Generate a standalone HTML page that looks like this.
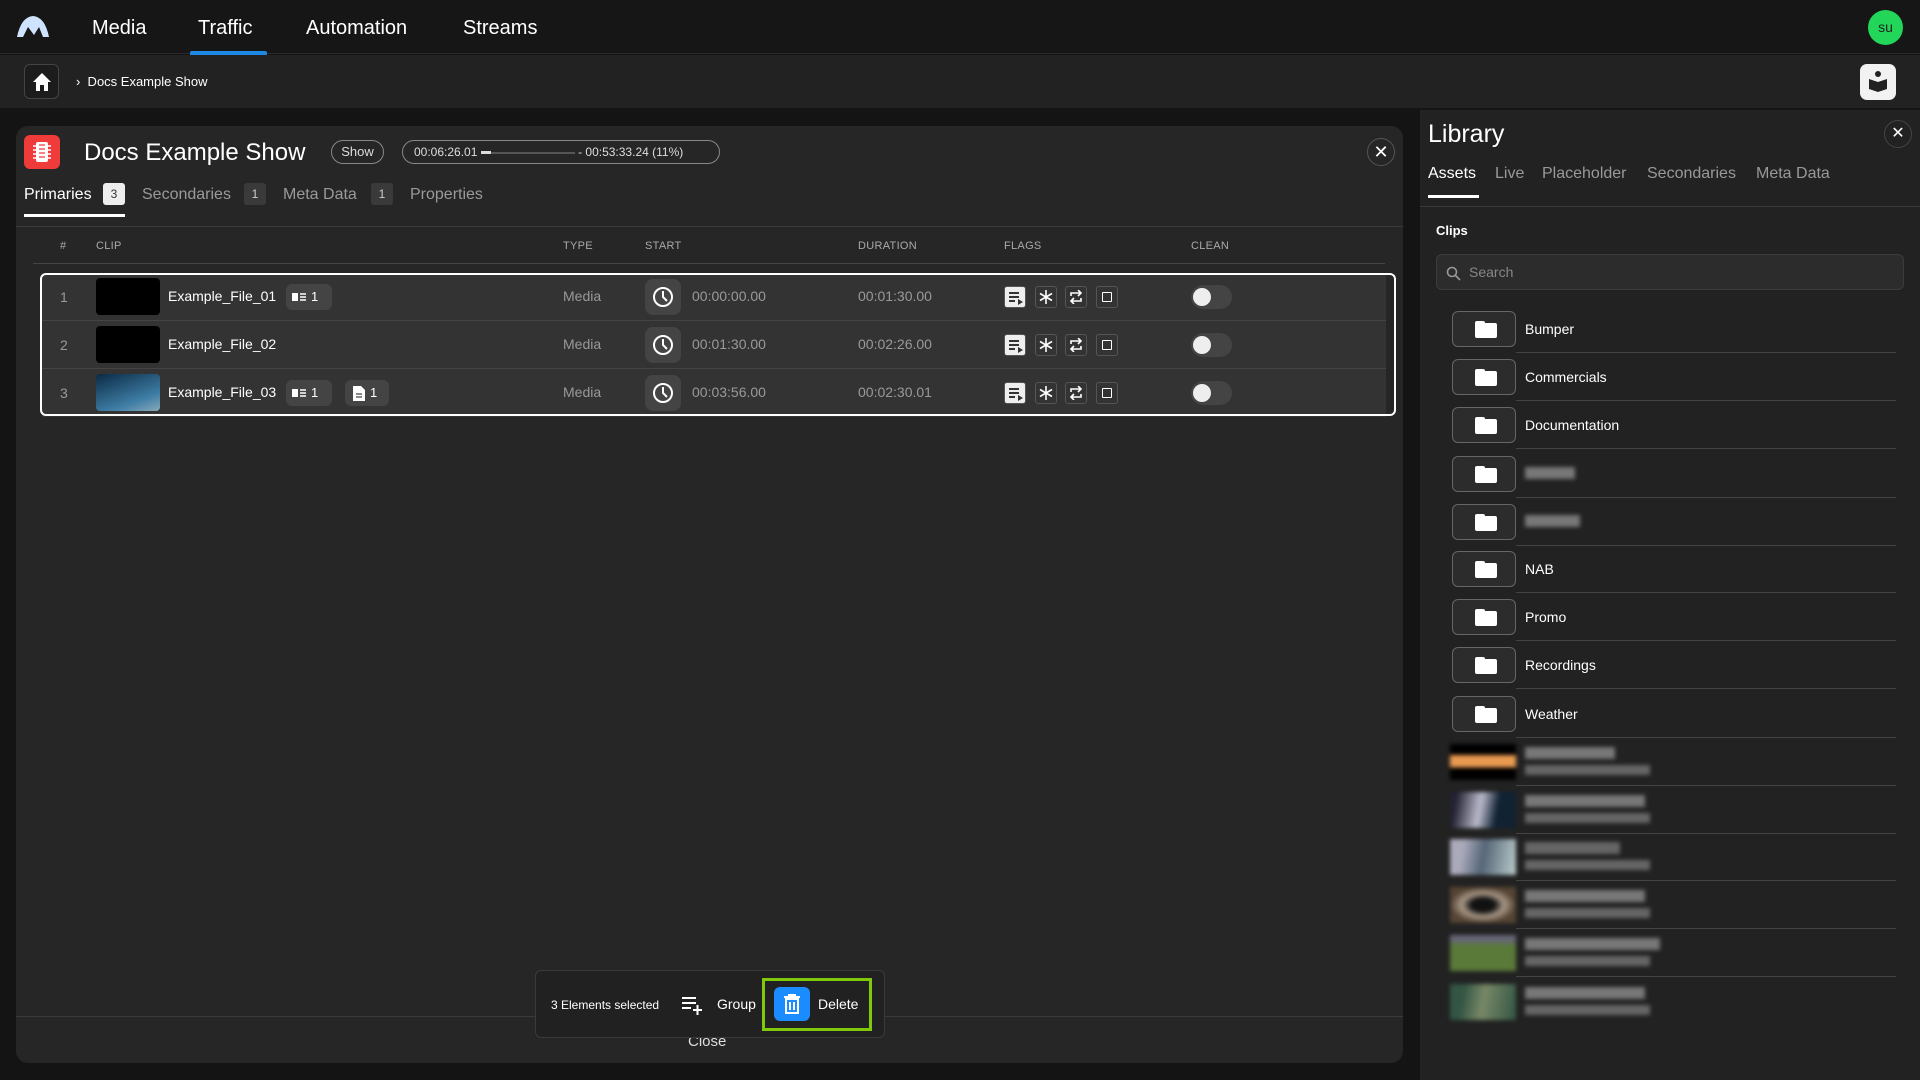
<!DOCTYPE html>
<html><head><meta charset="utf-8"><style>
*{box-sizing:border-box;margin:0;padding:0}
body{width:1920px;height:1080px;background:#141414;font-family:"Liberation Sans",sans-serif;color:#fff;position:relative;overflow:hidden}
.a{position:absolute}
.nav{left:0;top:0;width:1920px;height:54px;background:#161616;border-bottom:1px solid #2a2a2a}
.nav span{position:absolute;top:17px;font-size:20px;color:#fff}
.crumb{left:0;top:55px;width:1920px;height:53px;background:#222}
.panel{left:16px;top:126px;width:1387px;height:937px;background:#262626;border-radius:12px}
.tab{font-size:16px;color:#9a9a9a;top:186px}
.badge{background:#3a3a3a;color:#ccc;font-size:12px;border-radius:3px;width:22px;height:22px;text-align:center;line-height:22px;top:183px}
.th{top:240px;font-size:11px;color:#aaa;letter-spacing:.3px}
.row{left:42px;width:1344px;height:48px;background:#333;border-bottom:1px solid #444}
.row div,.row span,.row svg{position:absolute}
.num{left:18px;top:16px;font-size:14px;color:#999}
.thumb{left:54px;top:5px;width:64px;height:37px;background:#000;border-radius:4px}
.name{left:126px;top:15px;font-size:14px;color:#fff}
.cb{height:26px;background:#444;border-radius:6px;top:11px;font-size:13px;color:#fff;line-height:26px;padding-left:25px}
.med{left:521px;top:15px;font-size:14px;color:#999}
.clk{left:603px;top:6px;width:36px;height:36px;background:#444;border-radius:8px}
.t{top:15px;font-size:14px;color:#999}
.fl{top:13px;width:22px;height:22px;border:1px solid #555;border-radius:3px}
.tg{left:1149px;top:12px;width:41px;height:24px;background:#444;border-radius:12px}
.tg:after{content:"";position:absolute;left:2px;top:3px;width:18px;height:18px;border-radius:50%;background:#eee}
.lib{left:1420px;top:110px;width:500px;height:970px;background:#222}
.ltab{top:165px;font-size:16px;color:#999}
.frow{left:1452px;width:444px;height:48px}
.fb{position:absolute;left:0;top:6px;width:64px;height:36px;border:1px solid #666;border-radius:6px;background:#2c2c2c}
.fb:after{content:"";position:absolute;left:22px;top:11px;width:22px;height:15px;background:#fff;border-radius:2px}
.fb:before{content:"";position:absolute;left:22px;top:9px;width:10px;height:4px;background:#fff;border-radius:2px 2px 0 0}
.fl2{position:absolute;left:73px;top:16px;font-size:14px;color:#fff}
.sep{position:absolute;left:64px;right:0;bottom:0;height:1px;background:#444}
.bl{position:absolute;filter:blur(2px)}
</style></head><body>
<div class="a nav">
<svg class="a" style="left:17px;top:15px" width="32" height="22" viewBox="0 0 32 22"><path d="M0 22 Q4 2 16 1 Q28 2 32 22 L26 22 L22 12 L17 20 L11 12 L6 22Z" fill="#cfe3ff"/></svg>
<span style="left:92px">Media</span><span style="left:198px">Traffic</span><span style="left:306px">Automation</span><span style="left:463px">Streams</span>
<div class="a" style="left:190px;top:51px;width:77px;height:4px;background:#1e88e5;border-radius:2px 2px 0 0"></div>
<div class="a" style="left:1868px;top:10px;width:35px;height:35px;border-radius:50%;background:#22d65a;color:#222;font-size:14px;text-align:center;line-height:35px">su</div>
</div>
<div class="a crumb">
<div class="a" style="left:24px;top:9px;width:35px;height:35px;border:1px solid #444;border-radius:6px;background:#1c1c1c"><svg class="a" style="left:7px;top:7px" width="20" height="20" viewBox="0 0 20 20"><path d="M10 1 L19 10 L16 10 L16 19 L12 19 L12 13 L8 13 L8 19 L4 19 L4 10 L1 10Z" fill="#fff"/></svg></div>
<div class="a" style="left:76px;top:19px;font-size:13px;color:#fff">›&nbsp; Docs Example Show</div>
<div class="a" style="left:1860px;top:9px;width:36px;height:36px;background:#f2f2f2;border-radius:7px"><svg class="a" style="left:8px;top:6px" width="20" height="22" viewBox="0 0 20 22"><circle cx="10" cy="4" r="3" fill="#222"/><path d="M1 9 L10 12 L19 9 L19 19 L10 22 L1 19Z" fill="#222"/></svg></div>
</div>
<div class="a panel"></div>
<div class="a" style="left:24px;top:135px;width:36px;height:34px;background:#f03b3b;border-radius:6px"><svg class="a" style="left:9px;top:6px" width="18" height="22" viewBox="0 0 18 22"><rect x="3" y="1" width="12" height="20" rx="2" fill="#fff"/><path d="M0 5H18M0 9H18M0 13H18M0 17H18" stroke="#fff" stroke-width="1.5"/><path d="M6 4H12M6 8H12M6 12H12M6 16H12" stroke="#f03b3b" stroke-width="1.2"/></svg></div>
<div class="a" style="left:84px;top:139px;font-size:24px">Docs Example Show</div>
<div class="a" style="left:331px;top:140px;width:53px;height:24px;border:1px solid #888;border-radius:12px;font-size:13px;text-align:center;line-height:22px;color:#ddd">Show</div>
<div class="a" style="left:402px;top:140px;width:318px;height:24px;border:1px solid #888;border-radius:12px;font-size:12px;line-height:22px;color:#ddd;padding-left:11px">00:06:26.01 <span style="display:inline-block;width:94px;height:2px;background:#555;vertical-align:middle;position:relative"><span style="position:absolute;left:0;top:-1px;width:10px;height:3px;background:#ddd"></span></span> - 00:53:33.24 (11%)</div>
<div class="a" style="left:1367px;top:138px;width:28px;height:28px;border:1px solid #555;border-radius:50%;text-align:center;line-height:26px;font-size:18px">✕</div>
<div class="a tab" style="left:24px;color:#fff">Primaries</div><div class="a badge" style="left:103px;background:#eee;color:#333">3</div>
<div class="a tab" style="left:142px">Secondaries</div><div class="a badge" style="left:244px">1</div>
<div class="a tab" style="left:283px">Meta Data</div><div class="a badge" style="left:371px">1</div>
<div class="a tab" style="left:410px">Properties</div>
<div class="a" style="left:24px;top:214px;width:101px;height:3px;background:#fff"></div>
<div class="a" style="left:16px;top:226px;width:1387px;height:1px;background:#3a3a3a"></div>
<div class="a th" style="left:60px">#</div><div class="a th" style="left:96px">CLIP</div><div class="a th" style="left:563px">TYPE</div><div class="a th" style="left:645px">START</div><div class="a th" style="left:858px">DURATION</div><div class="a th" style="left:1004px">FLAGS</div><div class="a th" style="left:1191px">CLEAN</div>
<div class="a" style="left:33px;top:263px;width:1352px;height:1px;background:#444"></div>

<!-- row template pieces repeated -->
<div class="a row" style="top:273px"><span class="num">1</span><div class="thumb"></div><span class="name">Example_File_01</span><div class="cb" style="left:244px;width:46px">1<svg style="left:6px;top:8px" width="14" height="10" viewBox="0 0 14 10"><rect x="0" y="1" width="6" height="8" fill="#fff"/><path d="M8 2H14M8 5H14M8 8H14" stroke="#fff" stroke-width="1.5"/></svg></div><span class="med">Media</span><div class="clk"><svg style="left:7px;top:7px" width="22" height="22" viewBox="0 0 22 22"><circle cx="11" cy="11" r="9" stroke="#fff" stroke-width="2" fill="none"/><path d="M11 5V11L15 15" stroke="#fff" stroke-width="2" fill="none"/></svg></div><span class="t" style="left:650px">00:00:00.00</span><span class="t" style="left:816px">00:01:30.00</span>
<div class="fl" style="left:962px;background:#eee"><svg style="left:3px;top:4px" width="16" height="14" viewBox="0 0 16 14"><path d="M1 2H11M1 6H11M1 10H7" stroke="#333" stroke-width="2"/><path d="M10 8L15 11L10 14Z" fill="#333"/></svg></div><div class="fl" style="left:993px"><svg style="left:3px;top:3px" width="14" height="14" viewBox="0 0 14 14"><path d="M7 0V14M1 3.5L13 10.5M1 10.5L13 3.5" stroke="#fff" stroke-width="1.6"/></svg></div><div class="fl" style="left:1023px"><svg style="left:3px;top:3px" width="14" height="14" viewBox="0 0 14 14"><path d="M2 6V3H12M9 0L12 3L9 6M12 8V11H2M5 8L2 11L5 14" stroke="#fff" stroke-width="1.6" fill="none"/></svg></div><div class="fl" style="left:1054px"><div style="left:5px;top:5px;width:10px;height:10px;border:1.5px solid #fff;border-radius:1px"></div></div><div class="tg"></div></div>

<div class="a row" style="top:321px"><span class="num">2</span><div class="thumb"></div><span class="name">Example_File_02</span><span class="med">Media</span><div class="clk"><svg style="left:7px;top:7px" width="22" height="22" viewBox="0 0 22 22"><circle cx="11" cy="11" r="9" stroke="#fff" stroke-width="2" fill="none"/><path d="M11 5V11L15 15" stroke="#fff" stroke-width="2" fill="none"/></svg></div><span class="t" style="left:650px">00:01:30.00</span><span class="t" style="left:816px">00:02:26.00</span>
<div class="fl" style="left:962px;background:#eee"><svg style="left:3px;top:4px" width="16" height="14" viewBox="0 0 16 14"><path d="M1 2H11M1 6H11M1 10H7" stroke="#333" stroke-width="2"/><path d="M10 8L15 11L10 14Z" fill="#333"/></svg></div><div class="fl" style="left:993px"><svg style="left:3px;top:3px" width="14" height="14" viewBox="0 0 14 14"><path d="M7 0V14M1 3.5L13 10.5M1 10.5L13 3.5" stroke="#fff" stroke-width="1.6"/></svg></div><div class="fl" style="left:1023px"><svg style="left:3px;top:3px" width="14" height="14" viewBox="0 0 14 14"><path d="M2 6V3H12M9 0L12 3L9 6M12 8V11H2M5 8L2 11L5 14" stroke="#fff" stroke-width="1.6" fill="none"/></svg></div><div class="fl" style="left:1054px"><div style="left:5px;top:5px;width:10px;height:10px;border:1.5px solid #fff;border-radius:1px"></div></div><div class="tg"></div></div>

<div class="a row" style="top:369px;border-bottom:none"><span class="num">3</span><div class="thumb" style="background:linear-gradient(160deg,#0a2a44,#3f7ea6 70%,#8ab 100%)"></div><span class="name">Example_File_03</span><div class="cb" style="left:244px;width:46px">1<svg style="left:6px;top:8px" width="14" height="10" viewBox="0 0 14 10"><rect x="0" y="1" width="6" height="8" fill="#fff"/><path d="M8 2H14M8 5H14M8 8H14" stroke="#fff" stroke-width="1.5"/></svg></div><div class="cb" style="left:303px;width:44px">1<svg style="left:8px;top:6px" width="12" height="15" viewBox="0 0 12 15"><path d="M0 0H8L12 4V15H0Z" fill="#fff"/><path d="M3 8H9M3 11H9" stroke="#444" stroke-width="1.3"/></svg></div><span class="med">Media</span><div class="clk"><svg style="left:7px;top:7px" width="22" height="22" viewBox="0 0 22 22"><circle cx="11" cy="11" r="9" stroke="#fff" stroke-width="2" fill="none"/><path d="M11 5V11L15 15" stroke="#fff" stroke-width="2" fill="none"/></svg></div><span class="t" style="left:650px">00:03:56.00</span><span class="t" style="left:816px">00:02:30.01</span>
<div class="fl" style="left:962px;background:#eee"><svg style="left:3px;top:4px" width="16" height="14" viewBox="0 0 16 14"><path d="M1 2H11M1 6H11M1 10H7" stroke="#333" stroke-width="2"/><path d="M10 8L15 11L10 14Z" fill="#333"/></svg></div><div class="fl" style="left:993px"><svg style="left:3px;top:3px" width="14" height="14" viewBox="0 0 14 14"><path d="M7 0V14M1 3.5L13 10.5M1 10.5L13 3.5" stroke="#fff" stroke-width="1.6"/></svg></div><div class="fl" style="left:1023px"><svg style="left:3px;top:3px" width="14" height="14" viewBox="0 0 14 14"><path d="M2 6V3H12M9 0L12 3L9 6M12 8V11H2M5 8L2 11L5 14" stroke="#fff" stroke-width="1.6" fill="none"/></svg></div><div class="fl" style="left:1054px"><div style="left:5px;top:5px;width:10px;height:10px;border:1.5px solid #fff;border-radius:1px"></div></div><div class="tg"></div></div>
<div class="a" style="left:40px;top:273px;width:1356px;height:143px;border:2px solid #fff;border-radius:6px"></div>

<div class="a" style="left:16px;top:1016px;width:1387px;height:1px;background:#3a3a3a"></div>
<div class="a" style="left:688px;top:1033px;font-size:15px;color:#ddd">Close</div>
<div class="a" style="left:535px;top:970px;width:350px;height:68px;background:#212121;border:1px solid #3a3a3a;border-radius:6px"></div>
<div class="a" style="left:551px;top:998px;font-size:12px">3 Elements selected</div>
<svg class="a" style="left:681px;top:995px" width="22" height="20" viewBox="0 0 22 20"><path d="M1 3H15M1 8H15M1 13H10M12 15H21M16.5 10V20" stroke="#fff" stroke-width="2"/></svg>
<div class="a" style="left:717px;top:996px;font-size:14px">Group</div>
<div class="a" style="left:762px;top:978px;width:110px;height:53px;border:3px solid #7fc80a"></div>
<div class="a" style="left:774px;top:987px;width:36px;height:34px;background:#1a8cff;border-radius:6px"><svg class="a" style="left:10px;top:7px" width="16" height="20" viewBox="0 0 16 20"><path d="M0 3H16M5 3V1H11V3M2 5H14V19H2Z M6 8V16M10 8V16" stroke="#fff" stroke-width="2" fill="none"/></svg></div>
<div class="a" style="left:818px;top:996px;font-size:14px">Delete</div>

<div class="a lib"></div>
<div class="a" style="left:1428px;top:120px;font-size:25px">Library</div>
<div class="a" style="left:1884px;top:120px;width:28px;height:28px;border:1px solid #444;border-radius:50%;text-align:center;line-height:26px;font-size:16px">✕</div>
<div class="a ltab" style="left:1428px;color:#fff">Assets</div><div class="a ltab" style="left:1495px">Live</div><div class="a ltab" style="left:1542px">Placeholder</div><div class="a ltab" style="left:1647px">Secondaries</div><div class="a ltab" style="left:1756px">Meta Data</div>
<div class="a" style="left:1428px;top:195px;width:51px;height:3px;background:#fff"></div>
<div class="a" style="left:1420px;top:206px;width:500px;height:1px;background:#3a3a3a"></div>
<div class="a" style="left:1436px;top:223px;font-size:13px;font-weight:bold">Clips</div>
<div class="a" style="left:1436px;top:254px;width:468px;height:36px;background:#2c2c2c;border:1px solid #3c3c3c;border-radius:6px"><svg class="a" style="left:9px;top:11px" width="15" height="15" viewBox="0 0 15 15"><circle cx="6" cy="6" r="4.5" stroke="#999" stroke-width="1.6" fill="none"/><path d="M9.5 9.5L14 14" stroke="#999" stroke-width="1.6"/></svg><span class="a" style="left:32px;top:9px;font-size:14px;color:#888">Search</span></div>

<div class="a frow" style="top:305px"><div class="fb"></div><span class="fl2">Bumper</span><div class="sep"></div></div>
<div class="a frow" style="top:353px"><div class="fb"></div><span class="fl2">Commercials</span><div class="sep"></div></div>
<div class="a frow" style="top:401px"><div class="fb"></div><span class="fl2">Documentation</span><div class="sep"></div></div>
<div class="a frow" style="top:450px"><div class="fb"></div><div class="bl" style="left:73px;top:17px;width:50px;height:12px;background:#777"></div><div class="sep"></div></div>
<div class="a frow" style="top:498px"><div class="fb"></div><div class="bl" style="left:73px;top:17px;width:55px;height:12px;background:#777"></div><div class="sep"></div></div>
<div class="a frow" style="top:545px"><div class="fb"></div><span class="fl2">NAB</span><div class="sep"></div></div>
<div class="a frow" style="top:593px"><div class="fb"></div><span class="fl2">Promo</span><div class="sep"></div></div>
<div class="a frow" style="top:641px"><div class="fb"></div><span class="fl2">Recordings</span><div class="sep"></div></div>
<div class="a frow" style="top:690px"><div class="fb"></div><span class="fl2">Weather</span><div class="sep"></div></div>

<div class="a frow" style="top:738px"><div class="bl" style="left:-2px;top:6px;width:66px;height:36px;background:linear-gradient(#000 30%,#e99a50 30% 65%,#000 65%)"></div><div class="bl" style="left:73px;top:9px;width:90px;height:12px;background:#777"></div><div class="bl" style="left:73px;top:27px;width:125px;height:10px;background:#666"></div><div class="sep"></div></div>
<div class="a frow" style="top:786px"><div class="bl" style="left:-2px;top:6px;width:66px;height:36px;background:linear-gradient(100deg,#223 10%,#bbc 45%,#123 70%)"></div><div class="bl" style="left:73px;top:9px;width:120px;height:12px;background:#777"></div><div class="bl" style="left:73px;top:27px;width:125px;height:10px;background:#666"></div><div class="sep"></div></div>
<div class="a frow" style="top:833px"><div class="bl" style="left:-2px;top:6px;width:66px;height:36px;background:linear-gradient(100deg,#aab 20%,#567 50%,#bcc)"></div><div class="bl" style="left:73px;top:9px;width:95px;height:12px;background:#666"></div><div class="bl" style="left:73px;top:27px;width:125px;height:10px;background:#666"></div><div class="sep"></div></div>
<div class="a frow" style="top:881px"><div class="bl" style="left:-2px;top:6px;width:66px;height:36px;background:radial-gradient(#111 25%,#a98 45%,#543 70%)"></div><div class="bl" style="left:73px;top:9px;width:120px;height:12px;background:#777"></div><div class="bl" style="left:73px;top:27px;width:125px;height:10px;background:#666"></div><div class="sep"></div></div>
<div class="a frow" style="top:929px"><div class="bl" style="left:-2px;top:6px;width:66px;height:36px;background:linear-gradient(#667 15%,#5a7a3a 30%)"></div><div class="bl" style="left:73px;top:9px;width:135px;height:12px;background:#777"></div><div class="bl" style="left:73px;top:27px;width:125px;height:10px;background:#666"></div><div class="sep"></div></div>
<div class="a frow" style="top:978px"><div class="bl" style="left:-2px;top:6px;width:66px;height:36px;background:linear-gradient(100deg,#354 20%,#786 50%,#354)"></div><div class="bl" style="left:73px;top:9px;width:120px;height:12px;background:#777"></div><div class="bl" style="left:73px;top:27px;width:125px;height:10px;background:#666"></div></div>
</body></html>
